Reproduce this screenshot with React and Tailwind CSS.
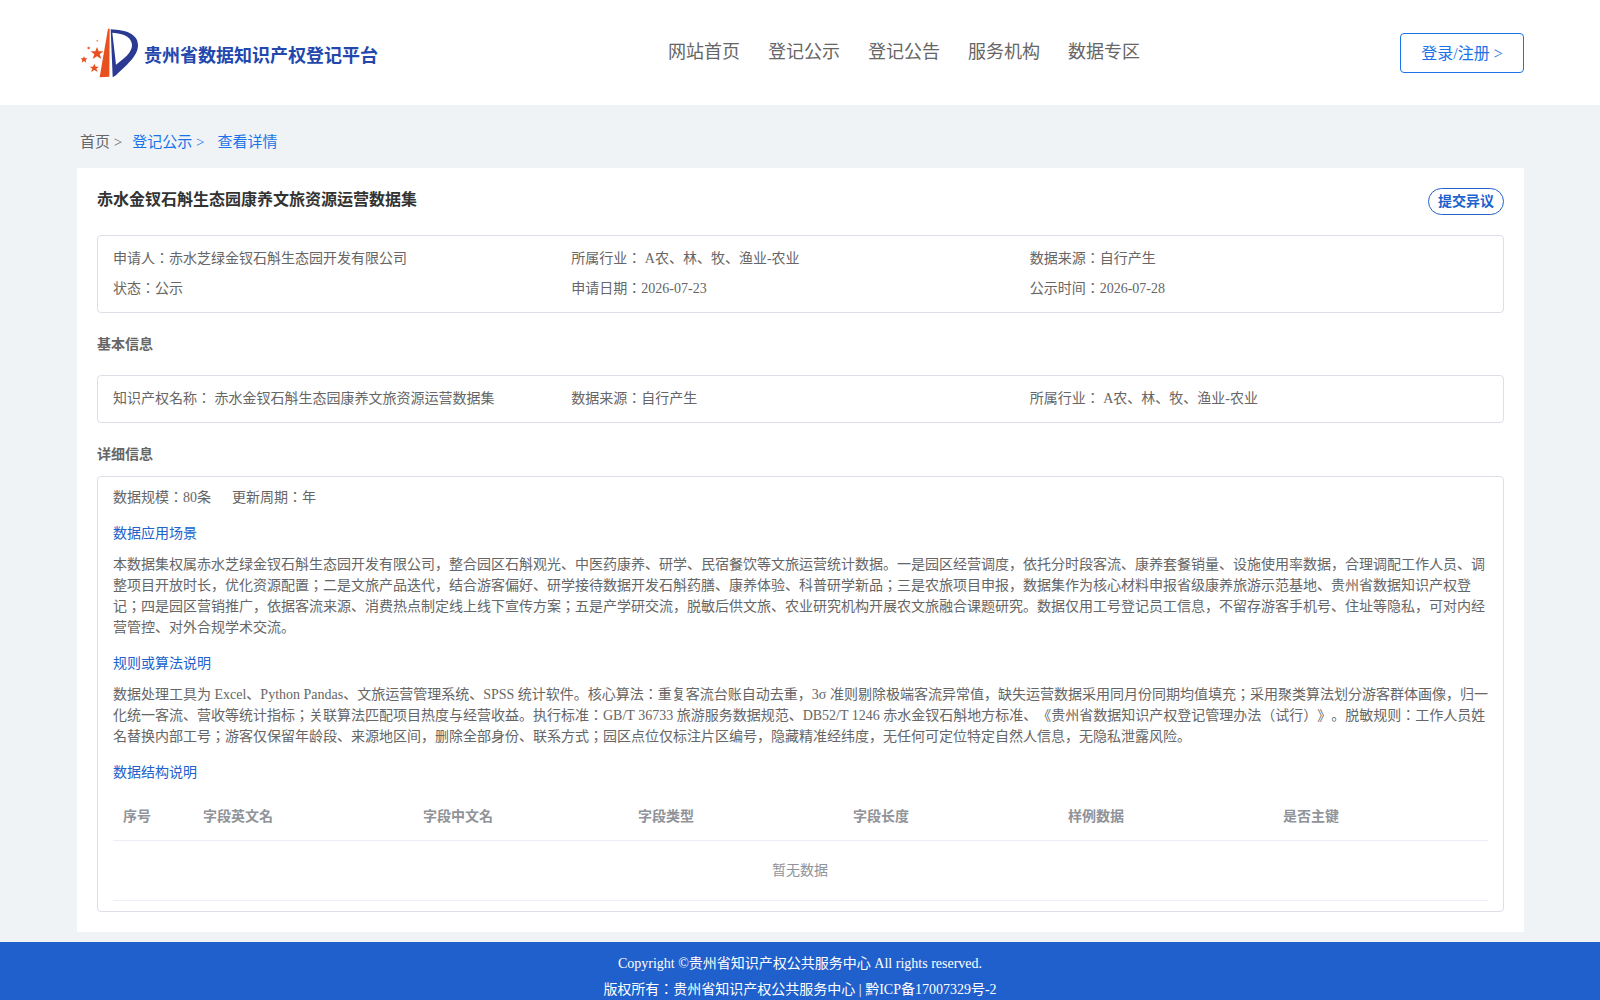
const nav = ["网站首页", "登记公示", "登记公告", "服务机构", "数据专区"]
const columns = ["序号", "字段英文名", "字段中文名", "字段类型", "字段长度", "样例数据", "是否主键"]

function Logo() {
  return (
    <svg width="66" height="58" viewBox="0 0 198 174" className="shrink-0">
      <path d="M71 160 L96 14 L101 14 L100 158 Z" fill="#e8501f" />
      <path d="M104 16 C150 18 186 30 186 64 C186 98 148 126 120 154 L110 160 Z" fill="#2a3a93" />
      <path d="M109 26 C146 28 168 42 168 64 C168 86 142 106 120 122 Z" fill="#ffffff" />
      <polygon points="63,69 68,82 82,82 71,91 76,105 63,97 50,105 55,91 44,82 58,82" fill="#e8501f" />
      <polygon points="24,97 27,103 34,103 29,108 31,116 24,111 17,116 19,108 14,103 21,103" fill="#e8501f" />
      <polygon points="55,119 59,128 69,128 61,134 65,144 55,138 45,144 49,134 41,128 51,128" fill="#e8501f" />
      <circle cx="38" cy="72" r="4" fill="#ee6a3e" />
      <circle cx="64" cy="50" r="3" fill="#f19a7c" />
    </svg>
  )
}

function InfoBox({ className, children }) {
  return <div className={`rounded border border-[#dcdfe6] px-[15px] text-[14px] text-[#666] ${className}`}>{children}</div>
}

function SectionLink({ children, className }) {
  return <div className={`text-[14px] leading-[21px] text-[#2062cc] ${className}`}>{children}</div>
}

export default function App() {
  return (
    <div className="min-h-[1000px] overflow-hidden bg-[#eff3f6] font-['Liberation_Serif','Noto_Sans_CJK_JP',serif] [text-spacing-trim:space-all]">
      {/* Header */}
      <header className="flex h-[105px] items-center bg-white pl-[76px] pr-[76px]">
        <div className="flex w-[305px] items-center gap-[2px]">
          <Logo />
          <span className="mt-[8px] whitespace-nowrap text-[18px] font-bold text-[#2347ad]">贵州省数据知识产权登记平台</span>
        </div>
        <nav className="ml-[287px] flex gap-[28px] text-[18px] text-[#666]">
          {nav.map((item) => (
            <a key={item} className="whitespace-nowrap">{item}</a>
          ))}
        </nav>
        <button className="ml-auto h-10 w-[124px] rounded border border-[#1a73e8] pt-[2px] text-[16px] text-[#1a73e8]">登录/注册 &gt;</button>
      </header>

      {/* Breadcrumb */}
      <div className="flex h-[63px] items-center pl-[80px] pt-[11px] text-[15px] leading-none text-[#666]">
        <span>首页 &gt;</span>
        <span className="ml-[10px] text-[#1a73e8]">登记公示 &gt;</span>
        <span className="ml-[13px] text-[#1a73e8]">查看详情</span>
      </div>

      <main className="ml-[77px] mr-[76px] h-[764px] bg-white px-5">
        <div className="flex items-start justify-between pt-5">
          <h1 className="text-[16px] font-bold leading-6 text-[#333]">赤水金钗石斛生态园康养文旅资源运营数据集</h1>
          <button className="h-[27px] rounded-[14px] border border-[#2062cc] px-[9px] text-[14px] font-bold text-[#2062cc]">提交异议</button>
        </div>

        <InfoBox className="mt-5 h-[78px] pt-[8px]">
          <div className="grid grid-cols-3 leading-[30px]">
            <span>申请人：赤水芝绿金钗石斛生态园开发有限公司</span>
            <span>所属行业： A农、林、牧、渔业-农业</span>
            <span>数据来源：自行产生</span>
            <span>状态：公示</span>
            <span>申请日期：2026-07-23</span>
            <span>公示时间：2026-07-28</span>
          </div>
        </InfoBox>

        <h2 className="mt-[20px] text-[14px] font-bold leading-[24px] text-[#666]">基本信息</h2>
        <InfoBox className="mt-[18px] flex h-[48px] items-center pb-[2px]">
          <div className="grid w-full grid-cols-3">
            <span>知识产权名称： 赤水金钗石斛生态园康养文旅资源运营数据集</span>
            <span>数据来源：自行产生</span>
            <span>所属行业： A农、林、牧、渔业-农业</span>
          </div>
        </InfoBox>

        <h2 className="mt-[20px] text-[14px] font-bold leading-[24px] text-[#666]">详细信息</h2>
        <InfoBox className="mt-[9px] h-[436px] pt-[10px]">
          <div className="flex gap-[21px] leading-[21px]">
            <span>数据规模：80条</span>
            <span>更新周期：年</span>
          </div>
          <SectionLink className="mt-[15px]">数据应用场景</SectionLink>
          <p className="mt-[10px] leading-[21px]">
            本数据集权属赤水芝绿金钗石斛生态园开发有限公司，整合园区石斛观光、中医药康养、研学、民宿餐饮等文旅运营统计数据。一是园区经营调度，依托分时段客流、康养套餐销量、设施使用率数据，合理调配工作人员、调整项目开放时长，优化资源配置；二是文旅产品迭代，结合游客偏好、研学接待数据开发石斛药膳、康养体验、科普研学新品；三是农旅项目申报，数据集作为核心材料申报省级康养旅游示范基地、贵州省数据知识产权登记；四是园区营销推广，依据客流来源、消费热点制定线上线下宣传方案；五是产学研交流，脱敏后供文旅、农业研究机构开展农文旅融合课题研究。数据仅用工号登记员工信息，不留存游客手机号、住址等隐私，可对内经营管控、对外合规学术交流。
          </p>
          <SectionLink className="mt-[15px]">规则或算法说明</SectionLink>
          <p className="mt-[10px] leading-[21px]">
            数据处理工具为 Excel、Python Pandas、文旅运营管理系统、SPSS 统计软件。核心算法：重复客流台账自动去重，3σ 准则剔除极端客流异常值，缺失运营数据采用同月份同期均值填充；采用聚类算法划分游客群体画像，归一化统一客流、营收等统计指标；关联算法匹配项目热度与经营收益。执行标准：GB/T 36733 旅游服务数据规范、DB52/T 1246 赤水金钗石斛地方标准、《贵州省数据知识产权登记管理办法（试行）》。脱敏规则：工作人员姓名替换内部工号；游客仅保留年龄段、来源地区间，删除全部身份、联系方式；园区点位仅标注片区编号，隐藏精准经纬度，无任何可定位特定自然人信息，无隐私泄露风险。
          </p>
          <SectionLink className="mt-[15px]">数据结构说明</SectionLink>

          {/* Table */}
          <div className="mt-[12px] border-b border-[#ebeef5]">
            <div className="grid h-[46px] grid-cols-[80px_220px_repeat(5,1fr)] items-center border-b border-[#ebeef5] pb-[2px] text-[14px] font-bold text-[#909399]">
              {columns.map((col) => (
                <span key={col} className="px-[10px]">{col}</span>
              ))}
            </div>
            <div className="flex h-[59px] items-center justify-center pr-[1px] text-[14px] text-[#909399]">暂无数据</div>
          </div>
        </InfoBox>
      </main>

      <footer className="mt-[10px] h-[58px] bg-[#2060cc] pt-[9px] text-center text-[14px] leading-[26px] text-white">
        <div>Copyright ©贵州省知识产权公共服务中心 All rights reserved.</div>
        <div>版权所有：贵州省知识产权公共服务中心 | 黔ICP备17007329号-2</div>
      </footer>
    </div>
  )
}
